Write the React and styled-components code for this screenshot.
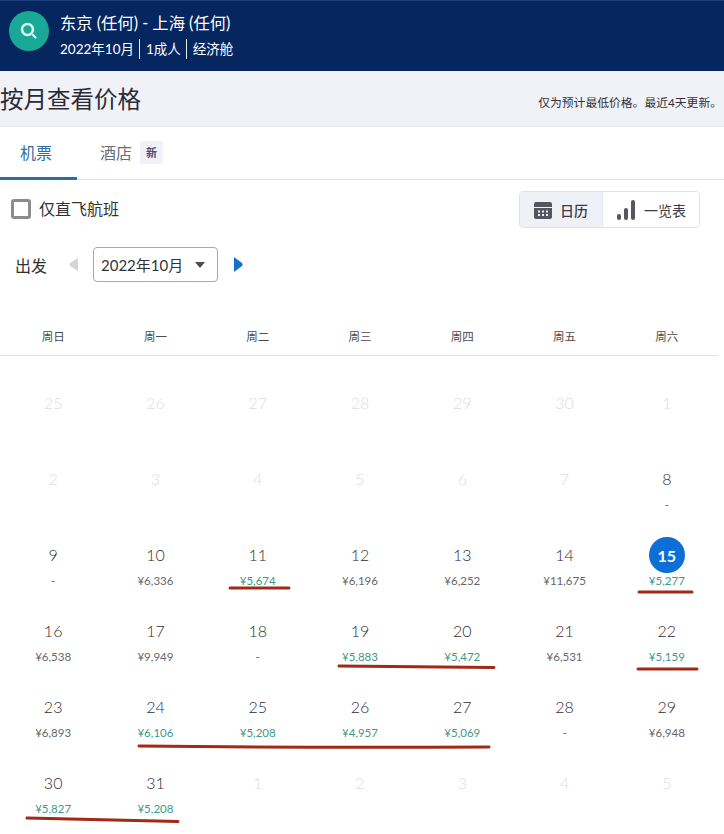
import React from 'react';
import styled, { createGlobalStyle } from 'styled-components';

const GlobalStyle = createGlobalStyle`
  html, body {
    margin: 0;
    padding: 0;
    background: #fff;
  }
  body {
    font-family: "Lato", "Noto Sans CJK SC", sans-serif;
    color: #26262c;
  }
`;

const Page = styled.div`
  width: 724px;
  height: 834px;
  overflow: hidden;
`;

const Header = styled.header`
  height: 71px;
  box-sizing: border-box;
  background: #05265f;
  border-top: 1px solid #1b3f78;
  display: flex;
  align-items: center;
  padding: 0 0 0 9px;
  gap: 11px;
  color: #fff;
`;

const SearchBadge = styled.div`
  width: 40px;
  height: 40px;
  margin-bottom: 10px;
  border-radius: 50%;
  background: #1aa896;
  display: flex;
  align-items: center;
  justify-content: center;
`;

const Route = styled.div`
  font-size: 16.3px;
  line-height: 20px;
  margin-bottom: 6px;
`;

const Meta = styled.div`
  display: flex;
  align-items: center;
  font-size: 13.5px;
  line-height: 20px;
`;

const MetaItem = styled.span`
  padding: 0 5.5px;
  border-left: 1px solid #e8edf5;
  &:first-child {
    padding-left: 0;
    border-left: 0;
  }
`;

const TitleBar = styled.div`
  height: 56px;
  box-sizing: border-box;
  background: #f0f2f8;
  border-bottom: 1px solid #e6e8ee;
  display: flex;
  justify-content: space-between;
  align-items: flex-start;
`;

const Title = styled.h1`
  margin: 10px 0 0;
  font-size: 23.5px;
  line-height: 36px;
  font-weight: 400;
  color: #2b2b36;
`;

const Note = styled.span`
  margin: 24px 2px 0 0;
  font-size: 11.8px;
  line-height: 16px;
  color: #333;
`;

const Tabs = styled.nav`
  height: 53px;
  box-sizing: border-box;
  border-bottom: 1px solid #e0e2e6;
  display: flex;
`;

const Tab = styled.div`
  width: ${p => p.$width}px;
  box-sizing: border-box;
  height: 53px;
  padding-left: ${p => p.$pad}px;
  display: flex;
  align-items: center;
  gap: 8px;
  font-size: 16px;
  color: ${p => (p.$active ? '#2f6f9f' : '#6a6e78')};
  border-bottom: 3px solid ${p => (p.$active ? '#2a6ca8' : 'transparent')};
`;

const NewTag = styled.span`
  width: 23px;
  height: 23px;
  border-radius: 3px;
  background: #f0f0f6;
  color: #4d4a72;
  font-size: 11px;
  font-weight: 700;
  display: flex;
  align-items: center;
  justify-content: center;
`;

const FilterRow = styled.div`
  display: flex;
  justify-content: space-between;
  align-items: flex-start;
  padding: 11px 24px 0 11px;
  height: 67px;
  box-sizing: border-box;
`;

const CheckLabel = styled.label`
  display: flex;
  align-items: center;
  gap: 8px;
  font-size: 16px;
  line-height: 20px;
  margin-top: 8px;
  color: #333;
`;

const CheckBox = styled.span`
  width: 14px;
  height: 14px;
  border: 3px solid #8c8c8c;
  border-radius: 3px;
  display: block;
`;

const Toggle = styled.div`
  display: flex;
  height: 37px;
  box-sizing: border-box;
  border: 1px solid #e0e1e6;
  border-radius: 4px;
  overflow: hidden;
`;

const ToggleItem = styled.div`
  width: ${p => p.$width}px;
  display: flex;
  align-items: center;
  justify-content: center;
  gap: 8px;
  font-size: 14px;
  font-weight: ${p => (p.$active ? 500 : 400)};
  color: #3c3c46;
  background: ${p => (p.$active ? '#f0f1f6' : '#fff')};
  border-left: ${p => (p.$active ? '0' : '1px solid #e8e9ee')};
`;

const MonthRow = styled.div`
  display: flex;
  align-items: center;
  height: 35px;
  padding-left: 15px;
`;

const MonthLabel = styled.span`
  font-size: 16px;
  width: 53px;
  color: #333;
`;

const MonthSelect = styled.div`
  width: 125px;
  height: 35px;
  box-sizing: border-box;
  margin: 0 15px 0 0;
  border: 1px solid #a8a8a8;
  border-radius: 4px;
  padding: 0 12px 0 7px;
  display: flex;
  align-items: center;
  justify-content: space-between;
  font-size: 15px;
  color: #333;
`;

const Arrow = styled.svg`
  display: block;
  margin-right: ${p => p.$gap || 0}px;
`;

const Calendar = styled.section`
  position: relative;
  margin-top: 34px;
  padding-left: 2px;
`;

const WeekRow = styled.div`
  width: 716px;
  height: 39px;
  display: grid;
  grid-template-columns: repeat(7, 1fr);
  align-items: center;
  border-bottom: 1px solid #e2e3e6;
  margin-left: -2px;
  padding-left: 2px;
  font-size: 11.5px;
  text-align: center;
  color: #4a4a50;
`;

const DayGrid = styled.div`
  width: 716px;
  display: grid;
  grid-template-columns: repeat(7, 1fr);
  grid-auto-rows: 76px;
  padding-top: 29px;
`;

const Cell = styled.div`
  display: flex;
  flex-direction: column;
  align-items: center;
`;

const DayNum = styled.div`
  width: 36px;
  height: 36px;
  box-sizing: border-box;
  padding-bottom: ${p => (p.$selected ? 0 : 2)}px;
  border-radius: 50%;
  display: flex;
  align-items: center;
  justify-content: center;
  font-size: 16px;
  font-weight: ${p => (p.$selected ? 700 : 300)};
  color: ${p => (p.$selected ? '#fff' : p.$muted ? '#dcdde0' : '#2e2e32')};
  background: ${p => (p.$selected ? '#0b6fd6' : 'transparent')};
`;

const Price = styled.div`
  font-size: 11.5px;
  line-height: 16px;
  color: ${p => (p.$low ? '#3c9a86' : '#66666c')};
`;

const Marks = styled.svg`
  position: absolute;
  left: 0;
  top: 0;
  pointer-events: none;
`;

const weekdays = ['周日', '周一', '周二', '周三', '周四', '周五', '周六'];

// [day, price, cheap, muted]
const days = [
  [25, null, false, true], [26, null, false, true], [27, null, false, true], [28, null, false, true],
  [29, null, false, true], [30, null, false, true], [1, null, false, true],
  [2, null, false, true], [3, null, false, true], [4, null, false, true], [5, null, false, true],
  [6, null, false, true], [7, null, false, true], [8, '-'],
  [9, '-'], [10, '¥6,336'], [11, '¥5,674', true], [12, '¥6,196'], [13, '¥6,252'], [14, '¥11,675'], [15, '¥5,277', true],
  [16, '¥6,538'], [17, '¥9,949'], [18, '-'], [19, '¥5,883', true], [20, '¥5,472', true], [21, '¥6,531'], [22, '¥5,159', true],
  [23, '¥6,893'], [24, '¥6,106', true], [25, '¥5,208', true], [26, '¥4,957', true], [27, '¥5,069', true], [28, '-'], [29, '¥6,948'],
  [30, '¥5,827', true], [31, '¥5,208', true], [1, null, false, true], [2, null, false, true], [3, null, false, true],
  [4, null, false, true], [5, null, false, true],
];

// red pen strokes over the calendar
const strokes = [
  'M230 272 L289 272',
  'M639 276 L692 276',
  'M339 350 L494 351.5',
  'M638 353 L697 353',
  'M139 430 Q300 432 489 431',
  'M27 502 L178 505.5',
];

const App = () => (
  <Page>
    <GlobalStyle />
    <Header>
      <SearchBadge>
        <svg width="20" height="20" viewBox="0 0 20 20" fill="none">
          <circle cx="8.5" cy="8.5" r="5.5" stroke="#d8f4ef" strokeWidth="2.6" />
          <path d="M14 14 L16.5 16.5" stroke="#d8f4ef" strokeWidth="2.2" strokeLinecap="round" />
        </svg>
      </SearchBadge>
      <div>
        <Route>东京 (任何) - 上海 (任何)</Route>
        <Meta>
          <MetaItem>2022年10月</MetaItem>
          <MetaItem>1成人</MetaItem>
          <MetaItem>经济舱</MetaItem>
        </Meta>
      </div>
    </Header>

    <TitleBar>
      <Title>按月查看价格</Title>
      <Note>仅为预计最低价格。最近4天更新。</Note>
    </TitleBar>

    <Tabs>
      <Tab $active $width={77} $pad={20}>机票</Tab>
      <Tab $width={110} $pad={23}>酒店<NewTag>新</NewTag></Tab>
    </Tabs>

    <FilterRow>
      <CheckLabel><CheckBox />仅直飞航班</CheckLabel>
      <Toggle>
        <ToggleItem $active $width={82}>
          <svg width="18" height="18" viewBox="0 0 18 18">
            <path d="M2 1h14a2 2 0 0 1 2 2v3H0V3a2 2 0 0 1 2-2z" fill="#55565f" />
            <path fillRule="evenodd" fill="#55565f" d="M0 7h18v9a2 2 0 0 1-2 2H2a2 2 0 0 1-2-2z M4 9.5v2h2v-2z M8 9.5v2h2v-2z M12 9.5v2h2v-2z M4 13v2h2v-2z M8 13v2h2v-2z M12 13v2h2v-2z" />
          </svg>
          日历
        </ToggleItem>
        <ToggleItem $width={96}>
          <svg width="20" height="22" viewBox="0 0 20 22">
            <rect x="1" y="15" width="4" height="6" rx="2" fill="#55565f" />
            <rect x="8" y="9" width="4" height="12" rx="2" fill="#55565f" />
            <rect x="15" y="1" width="4" height="20" rx="2" fill="#55565f" />
          </svg>
          一览表
        </ToggleItem>
      </Toggle>
    </FilterRow>

    <MonthRow>
      <MonthLabel>出发</MonthLabel>
      <Arrow $gap={14} width="11" height="15" viewBox="0 0 11 15">
        <path d="M10 1 L2 6 Q0.5 7.5 2 9 L10 14z" fill="#d4d5d7" />
      </Arrow>
      <MonthSelect>
        2022年10月
        <svg width="10" height="6" viewBox="0 0 10 6"><path d="M0 0h10L5 6z" fill="#4e4e52" /></svg>
      </MonthSelect>
      <Arrow width="11" height="15" viewBox="0 0 11 15">
        <path d="M1 0 L9 6 Q10.5 7.5 9 9 L1 15z" fill="#1470c8" />
      </Arrow>
    </MonthRow>

    <Calendar>
      <WeekRow>
        {weekdays.map(w => <div key={w}>{w}</div>)}
      </WeekRow>
      <DayGrid>
        {days.map(([day, price, low, muted], i) => (
          <Cell key={i}>
            <DayNum $muted={muted} $selected={i === 20}>{day}</DayNum>
            {price && <Price $low={low}>{price}</Price>}
          </Cell>
        ))}
      </DayGrid>
      <Marks width="724" height="518" viewBox="0 0 724 518" fill="none">
        {strokes.map(d => (
          <path key={d} d={d} stroke="#a02a16" strokeWidth="3" strokeLinecap="round" />
        ))}
      </Marks>
    </Calendar>
  </Page>
);

export default App;
